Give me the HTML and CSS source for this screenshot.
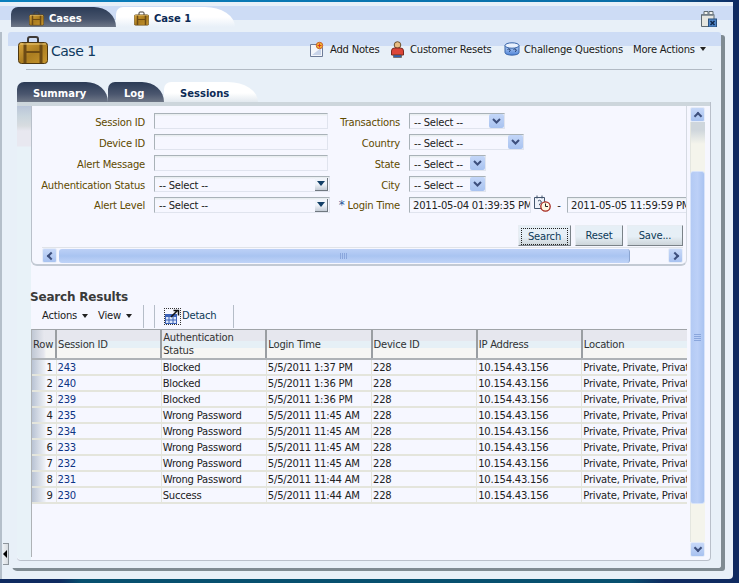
FILE: index.html
```html
<!DOCTYPE html>
<html lang="en">
<head>
<meta charset="utf-8">
<title>Case 1</title>
<link rel="stylesheet" href="styles.css">
</head>
<body>
<svg class="sprite" aria-hidden="true">
  <defs>
    <linearGradient id="gold" x1="0" y1="0" x2="1" y2="1">
      <stop offset="0" stop-color="#d9a63c"/><stop offset=".5" stop-color="#ab7d20"/><stop offset="1" stop-color="#c8962e"/>
    </linearGradient>
    <linearGradient id="drum" x1="0" y1="0" x2="0" y2="1">
      <stop offset="0" stop-color="#bcd3f7"/><stop offset="1" stop-color="#4f84d8"/>
    </linearGradient>
    <symbol id="case" viewBox="0 0 30 28">
      <path d="M10 7V3q0-2 2-2h6q2 0 2 2v4" fill="none" stroke="#3f3a36" stroke-width="2"/>
      <rect x=".5" y="6.5" width="29" height="21" rx="3" fill="url(#gold)" stroke="#4d3710"/>
      <path d="M7 7v20M23 7v20" stroke="#6d4b14" stroke-width="3"/>
      <path d="M8 16h14" stroke="#6d4b14" stroke-width="2"/>
      <path d="M2 8h26" stroke="#eccb78" stroke-width="1"/>
    </symbol>
    <symbol id="note" viewBox="0 0 16 16">
      <path d="M1.5 3.5h9l3 3v9h-12z" fill="#f4f6fa" stroke="#6e7c98"/>
      <path d="M3 14l9-7v7z" fill="#c8d3e8"/>
      <circle cx="10.5" cy="4.500" r="3.200" fill="#f7c531" stroke="#c4552b"/>
      <path d="M10.500 2.500v4M8.500 4.500h4" stroke="#d8382a" stroke-width="1.200"/>
    </symbol>
    <symbol id="person" viewBox="0 0 15 17">
      <circle cx="7.500" cy="4" r="3.300" fill="#e8bd84" stroke="#6b5230"/>
      <path d="M1.500 14V10q0-3 3-3h6q3 0 3 3v4z" fill="#dd4538" stroke="#7a2a20"/>
      <path d="M3.500 14h8v2.500h-8z" fill="#2f5fb0" stroke="#6b5230" stroke-width=".6"/>
    </symbol>
    <symbol id="drumq" viewBox="0 0 16 14">
      <path d="M1 3.500v7c0 3.500 14 3.500 14 0v-7z" fill="url(#drum)" stroke="#3864a8"/>
      <ellipse cx="8" cy="3.500" rx="7" ry="2.700" fill="#e9f1fd" stroke="#3864a8"/>
      <path d="M3.500 7.500q1.500-1.300 2.500 0t-1 2.200M9.500 7.500q1.500-1.300 2.500 0t-1 2.200" fill="none" stroke="#15305e" stroke-width=".9"/>
    </symbol>
    <symbol id="closewin" viewBox="0 0 16 16">
      <path d="M.5 3.500h12.500v12h-12.500z" fill="#e6e6e0" stroke="#5e6a72"/>
      <path d="M3 .5h4v3H3zM8 .5h4v3H8z" fill="#f3f3ee" stroke="#5e6a72"/>
      <path d="M1 3.500h12v1.500H1z" fill="#8b959c"/>
      <rect x="7.500" y="8" width="8" height="8" fill="#4f86c8" stroke="#29507f"/>
      <path d="M9.500 10l4 4M13.500 10l-4 4" stroke="#10284c" stroke-width="1.500"/>
    </symbol>
    <symbol id="detach" viewBox="0 0 15 15">
      <rect x=".5" y="5.500" width="11" height="9" fill="#dce7fb" stroke="#3d63b8"/>
      <path d="M.5 5.500h11v2.500H.5z" fill="#3d63b8"/>
      <path d="M4 8v6M8 8v6M1 11h10" stroke="#3d63b8"/>
      <path d="M6 8l6-6M8.500 1.500h5v5" fill="none" stroke="#111" stroke-width="1.500"/>
    </symbol>
    <symbol id="calclock" viewBox="0 0 17 17">
      <path d="M.5 2.500h10v11H.5z" fill="#eef2fa" stroke="#44566e"/>
      <path d="M3 .5v3M8 .5v3" stroke="#44566e"/>
      <path d="M4 6q1.500-1.500 3 0t-1.500 3v1.200" fill="none" stroke="#44566e"/>
      <circle cx="11.500" cy="11.500" r="4.700" fill="#fff6e0" stroke="#a5281e" stroke-width="1.300"/>
      <path d="M11.500 8.500v3h2.500" fill="none" stroke="#222"/>
    </symbol>
    <symbol id="chev-down" viewBox="0 0 9 6">
      <path d="M1 1l3.500 3.500L8 1" fill="none" stroke="#3d4f7d" stroke-width="2"/>
    </symbol>
  </defs>
</svg>

<div class="window">
  <div class="handle"><span class="handle-arrow"></span></div>

  <div class="top-row">
    <div class="toptab toptab-dark"><svg class="ic-case-sm"><use href="#case"/></svg>Cases</div>
    <div class="toptab toptab-light"><svg class="ic-case-sm"><use href="#case"/></svg>Case 1</div>
    <svg class="ic-close"><use href="#closewin"/></svg>
  </div>

  <div class="card">
    <div class="head">
      <svg class="ic-case-lg"><use href="#case"/></svg>
      <div class="head-title">Case 1</div>
      <div class="head-actions">
        <svg class="ic-note"><use href="#note"/></svg><span class="act act-notes">Add Notes</span>
        <svg class="ic-person"><use href="#person"/></svg><span class="act act-resets">Customer Resets</span>
        <svg class="ic-drum"><use href="#drumq"/></svg><span class="act act-quest">Challenge Questions</span>
        <span class="act act-more">More Actions</span><span class="tri"></span>
      </div>
    </div>
    <div class="rule"></div>

    <div class="subtabs">
      <div class="subtab subtab-dark subtab-summary">Summary</div>
      <div class="subtab subtab-dark subtab-log">Log</div>
      <div class="subtab subtab-light subtab-sessions">Sessions</div>
    </div>

    <div class="panel">
      <div class="panel-bar"></div>
      <div class="panel-body">
        <div class="rail"></div>
        <div class="main">
          <section class="frame">
            <div class="form-grid">
              <label class="lbl">Session ID</label><input class="inp" type="text">
              <label class="lbl lbl2">Transactions</label><div class="sel sel-w96"><span>-- Select --</span><b class="chev"><svg><use href="#chev-down"/></svg></b></div>

              <label class="lbl">Device ID</label><input class="inp" type="text">
              <label class="lbl lbl2">Country</label><div class="sel sel-w115"><span>-- Select --</span><b class="chev"><svg><use href="#chev-down"/></svg></b></div>

              <label class="lbl">Alert Message</label><input class="inp" type="text">
              <label class="lbl lbl2">State</label><div class="sel sel-w77"><span>-- Select --</span><b class="chev"><svg><use href="#chev-down"/></svg></b></div>

              <label class="lbl">Authentication Status</label><div class="sel sel-wide"><span>-- Select --</span><b class="drop"></b></div>
              <label class="lbl lbl2">City</label><div class="sel sel-w77"><span>-- Select --</span><b class="chev"><svg><use href="#chev-down"/></svg></b></div>

              <label class="lbl lbl-last">Alert Level</label><div class="sel sel-wide sel-last"><span>-- Select --</span><b class="drop"></b></div>
              <label class="lbl lbl2 lbl-last"><i class="req">*</i> Login Time</label>
              <div class="dates">
                <input class="inp inp-date" type="text" value="2011-05-04 01:39:35 PM">
                <svg class="ic-cal"><use href="#calclock"/></svg>
                <span class="dash">-</span>
                <input class="inp inp-date inp-date2" type="text" value="2011-05-05 11:59:59 PM">
              </div>
            </div>
            <div class="btns">
              <button class="btn btn-search" type="button"><span>Search</span></button>
              <button class="btn btn-reset" type="button">Reset</button>
              <button class="btn btn-save" type="button">Save...</button>
            </div>
            <div class="hscroll">
              <b class="sbtn"><i class="arr arr-l"></i></b>
              <div class="hthumb"><span class="grip-v"></span></div>
              <b class="sbtn sbtn-end"><i class="arr arr-r"></i></b>
            </div>
          </section>

          <h2 class="res-title">Search Results</h2>
          <div class="toolbar">
            <span class="tb-menu tb-actions">Actions<i class="tri"></i></span>
            <span class="tb-menu tb-view">View<i class="tri"></i></span>
            <span class="tb-sep tb-sep1"></span>
            <span class="tb-sep tb-sep2"></span>
            <svg class="ic-detach"><use href="#detach"/></svg>
            <span class="tb-detach">Detach</span>
            <span class="tb-sep tb-sep3"></span>
          </div>
          <div class="table-wrap">
            <table class="results">
              <colgroup>
                <col class="c-row"><col class="c-col"><col class="c-col"><col class="c-col"><col class="c-col"><col class="c-col"><col class="c-col">
              </colgroup>
              <thead>
                <tr><th>Row</th><th>Session ID</th><th>Authentication<br>Status</th><th>Login Time</th><th>Device ID</th><th>IP Address</th><th>Location</th></tr>
              </thead>
              <tbody>
                <tr><td class="rownum">1</td><td><a href="#">243</a></td><td>Blocked</td><td>5/5/2011 1:37 PM</td><td>228</td><td>10.154.43.156</td><td>Private, Private, Private</td></tr>
                <tr><td class="rownum">2</td><td><a href="#">240</a></td><td>Blocked</td><td>5/5/2011 1:36 PM</td><td>228</td><td>10.154.43.156</td><td>Private, Private, Private</td></tr>
                <tr><td class="rownum">3</td><td><a href="#">239</a></td><td>Blocked</td><td>5/5/2011 1:36 PM</td><td>228</td><td>10.154.43.156</td><td>Private, Private, Private</td></tr>
                <tr><td class="rownum">4</td><td><a href="#">235</a></td><td>Wrong Password</td><td>5/5/2011 11:45 AM</td><td>228</td><td>10.154.43.156</td><td>Private, Private, Private</td></tr>
                <tr><td class="rownum">5</td><td><a href="#">234</a></td><td>Wrong Password</td><td>5/5/2011 11:45 AM</td><td>228</td><td>10.154.43.156</td><td>Private, Private, Private</td></tr>
                <tr><td class="rownum">6</td><td><a href="#">233</a></td><td>Wrong Password</td><td>5/5/2011 11:45 AM</td><td>228</td><td>10.154.43.156</td><td>Private, Private, Private</td></tr>
                <tr><td class="rownum">7</td><td><a href="#">232</a></td><td>Wrong Password</td><td>5/5/2011 11:45 AM</td><td>228</td><td>10.154.43.156</td><td>Private, Private, Private</td></tr>
                <tr><td class="rownum">8</td><td><a href="#">231</a></td><td>Wrong Password</td><td>5/5/2011 11:44 AM</td><td>228</td><td>10.154.43.156</td><td>Private, Private, Private</td></tr>
                <tr><td class="rownum">9</td><td><a href="#">230</a></td><td>Success</td><td>5/5/2011 11:44 AM</td><td>228</td><td>10.154.43.156</td><td>Private, Private, Private</td></tr>
              </tbody>
            </table>
          </div>
        </div>
        <div class="vscroll">
          <b class="sbtn"><i class="arr arr-u"></i></b>
          <div class="vtrack">
            <div class="vthumb"><span class="grip-h"></span></div>
          </div>
          <b class="sbtn"><i class="arr arr-d"></i></b>
        </div>
      </div>
    </div>
  </div>
</div>
</body>
</html>
```
FILE: styles.css
```css
* { box-sizing: border-box; }
html, body { margin: 0; height: 100%; }
body {
  overflow: hidden;
  background:
    linear-gradient(90deg, #0a7fbc 0, #0a6fa8 85%, #0f2a60 100%) top / 100% 10px no-repeat,
    linear-gradient(90deg, #0f2a60 8%, #07506f 11%, #07506f 85%, #0f2a60 90%);
  font: 10px "DejaVu Sans", sans-serif;
  letter-spacing: -.22px;
  color: #222;
}
.sprite { display: block; width: 0; height: 0; }

.window {
  position: relative;
  margin-top: 2px;
  width: 733px;
  height: 577px;
  background: #e8f0f8;
  border-left: 2px solid #b4bfca;
  border-radius: 0 6px 4px 0;
}
.handle {
  position: absolute;
  left: 1px;
  top: 541px;
  width: 6px;
  height: 22px;
  background: linear-gradient(90deg, #eef1f4, #d6dbe0);
  border: 1px solid #8d959c;
  border-left: 0;
  display: flex;
  align-items: center;
}
.handle-arrow {
  width: 0; height: 0;
  border: 4px solid transparent;
  border-left: 0;
  border-right: 4px solid #000;
}

/* top tabs */
.top-row {
  display: flex;
  height: 30px;
  margin-left: -2px;
  padding: 5px 16px 0 11px;
  background: linear-gradient(#e8f0f8 4px, #cddcf5 4px, #cddcf5 18px, #e8f0f8 18px);
}
.toptab {
  height: 20px;
  padding-top: 3px;
  display: flex;
  align-items: center;
  font-weight: bold;
  font-size: 10px;
  letter-spacing: 0;
}
.toptab-dark {
  width: 105px;
  padding-left: 18px;
  color: #fff;
  border-radius: 7px 22px 0 0 / 7px 20px 0 0;
  background: linear-gradient(#2b3b56, #46536b 60%, #6e7787);
}
.toptab-light {
  width: 119px;
  padding-left: 18px;
  color: #0c2a55;
  border-radius: 7px 30px 0 0 / 7px 20px 0 0;
  background: linear-gradient(#fff, #fff 50%, #e8f0f8);
}
.ic-case-sm { width: 15px; height: 15px; margin-right: 5px; }
.ic-close { width: 16px; height: 16px; margin: 4px 0 0 auto; }

/* card */
.card {
  margin-left: 6px;
  width: 713px;
  height: 536px;
  border-radius: 3px 3px 3px 5px;
  background: linear-gradient(#cddcf5 14px, #e8f0f8 14px, #e8f0f8 100%);
  box-shadow: 4px 3px 0 #7f8b92;
}
.head {
  display: flex;
  height: 37px;
  padding: 4px 0 0 10px;
}
.ic-case-lg { width: 30px; height: 28px; }
.head-title {
  margin: 5px 0 0 3px;
  font-size: 14px;
  letter-spacing: -.5px;
  line-height: 20px;
  color: #0f3a5f;
}
.head-actions {
  display: flex;
  align-items: center;
  height: 18px;
  margin: 4px 0 0 auto;
  padding-right: 15px;
  color: #1a1a1a;
  white-space: nowrap;
}
.head-actions svg { flex: none; }
.ic-note { width: 16px; height: 16px; }
.act-notes { margin-left: 5px; width: 56px; }
.ic-person { width: 15px; height: 17px; margin-left: 4px; }
.act-resets { margin-left: 5px; width: 89px; }
.ic-drum { width: 16px; height: 14px; margin-left: 5px; }
.act-quest { margin-left: 4px; width: 101px; }
.act-more { margin-left: 8px; width: 67px; }
.tri {
  display: inline-block;
  width: 0; height: 0;
  border: 3px solid transparent;
  border-top: 4px solid #222;
  border-bottom: 0;
}
.rule {
  height: 1px;
  margin: 0 9px 0 18px;
  background: #b2bac4;
}

/* sub tabs */
.subtabs {
  display: flex;
  margin: 12px 0 0 9px;
  height: 20px;
}
.subtab {
  height: 20px;
  padding-top: 5px;
  line-height: 14px;
  font-weight: bold;
  letter-spacing: 0;
}
.subtab-dark {
  color: #fff;
  border-radius: 7px 22px 0 0 / 7px 20px 0 0;
  background: linear-gradient(#2b3b56, #4a566e 60%, #6e7787);
}
.subtab-light {
  color: #0c2a55;
  border-radius: 7px 30px 0 0 / 7px 20px 0 0;
  background: linear-gradient(#fff, #fff 55%, #e2e9ef);
}
.subtab-summary { width: 91px; padding-left: 16px; }
.subtab-log { width: 56px; padding-left: 16px; }
.subtab-sessions { width: 94px; padding-left: 16px; }

/* panel */
.panel {
  margin-left: 9px;
  width: 694px;
  height: 459px;
  border-right: 1px solid #b9c0ca;
  border-bottom: 1px solid #b9c0ca;
  border-radius: 0 0 4px 4px;
  overflow: hidden;
  background: #f6f7ff;
}
.panel-bar { height: 4px; background: #cdd6dc; }
.panel-body { display: flex; height: 454px; }
.rail {
  width: 14px;
  flex: none;
  background: linear-gradient(#b9c5d9 0, #c9d5dd 10px, #d8dce0 20px, #e8e8f0 25px, #e8e8f0 40px, #e8f2f8 41px);
  border-radius: 0 0 0 5px;
}
.main { width: 659px; flex: none; }

/* form frame */
.frame {
  width: 656px;
  height: 160px;
  padding-top: 7px;
  border-left: 1px solid #b9c0ca;
  border-right: 1px solid #d5dae2;
  border-bottom: 2px solid #c3cad4;
  border-radius: 0 0 6px 6px;
  overflow: hidden;
}
.form-grid {
  display: grid;
  grid-template-columns: 122px 176px 79px 1fr;
  grid-auto-rows: 16px;
  row-gap: 5px;
  align-items: center;
}
.lbl {
  text-align: right;
  padding: 2px 9px 0 0;
  color: #5f4a00;
  white-space: nowrap;
}
.lbl-last { padding-top: 0; }
.req { color: #2a5a9a; font-style: normal; font-size: 12px; }
.inp {
  display: block;
  width: 174px;
  height: 16px;
  margin: 0;
  padding: 0 3px;
  background: linear-gradient(#e9eef0 1px, #f6f7ff 2px);
  border: 1px solid #e0e4ee;
  border-top: 1px solid #a9b2b8;
  border-left: 1px solid #a9b2b8;
  border-radius: 0;
  outline: 0;
  font: 10px "DejaVu Sans", sans-serif;
  letter-spacing: -.22px;
  color: #222;
}
.sel {
  display: flex;
  align-items: center;
  justify-content: space-between;
  height: 16px;
  padding-left: 4px;
  background: linear-gradient(#e9eef0 1px, #f6f7ff 2px);
  border: 1px solid #e0e4ee;
  border-top: 1px solid #a9b2b8;
  border-left: 1px solid #a9b2b8;
}
.sel > span { padding-top: 2px; }
.sel-last > span { padding-top: 0; }
.sel-wide { width: 176px; }
.sel-w96 { width: 96px; }
.sel-w115 { width: 115px; }
.sel-w77 { width: 77px; }
.chev {
  display: flex;
  align-items: center;
  justify-content: center;
  width: 15px;
  height: 14px;
  background: linear-gradient(#c3d6f8, #a9c3f0);
  border-radius: 2px;
}
.chev svg { width: 9px; height: 6px; }
.drop {
  display: flex;
  align-items: center;
  justify-content: center;
  width: 13px;
  height: 13px;
  margin-right: 1px;
  background: linear-gradient(#f0f4fa 50%, #c4ccd6);
  border-right: 1px solid #707880;
  border-bottom: 1px solid #707880;
}
.drop::after {
  content: "";
  border: 4px solid transparent;
  border-top: 5px solid #123e66;
  border-bottom: 0;
}
.dates { display: flex; align-items: center; width: 279px; }
.inp-date { flex: none; width: 122px; padding-right: 0; white-space: nowrap; }
.inp-date2 { width: 125px; margin-right: -6px; }
.ic-cal { flex: none; width: 17px; height: 17px; margin: -3px 0 0 3px; }
.dash { flex: none; width: 16px; text-align: center; }

.btns {
  display: flex;
  gap: 4px;
  justify-content: flex-end;
  margin-top: 12px;
  padding-right: 3px;
}
.btn {
  height: 21px;
  padding: 0;
  font: 10px "DejaVu Sans", sans-serif;
  letter-spacing: -.22px;
  color: #0c3a58;
  background: linear-gradient(#e6eff6, #e6eff6 55%, #cdd5da);
  border: 1px solid #e8edf3;
  border-right: 1px solid #7a8288;
  border-bottom: 1px solid #7a8288;
}
.btn-search { width: 53px; }
.btn-search span { display: block; margin: 2px; padding: 1px 0; border: 1px dotted #222; line-height: 13px; }
.btn-reset { width: 48px; }
.btn-save { width: 56px; }

.hscroll {
  display: flex;
  align-items: center;
  height: 16px;
  margin: 1px 3px 0 10px;
  background: #f6f7ff;
  border-top: 1px solid #e0e3e8;
}
.sbtn {
  display: flex;
  flex: none;
  align-items: center;
  justify-content: center;
  width: 15px;
  height: 15px;
  background: linear-gradient(#c7d8f8, #a8c2f0);
  border: 1px solid #e5ecf8;
  border-radius: 2px;
}
.sbtn-end { margin-left: auto; }
.arr {
  width: 6px; height: 6px;
  border-left: 2px solid #3d4f7d;
  border-top: 2px solid #3d4f7d;
}
.arr-l { transform: rotate(-45deg); margin-left: 2px; }
.arr-r { transform: rotate(135deg); margin-right: 2px; }
.arr-u { transform: rotate(45deg); margin-top: 3px; }
.arr-d { transform: rotate(225deg); margin-top: -3px; }
.hthumb {
  display: flex;
  align-items: center;
  justify-content: center;
  width: 571px;
  height: 14px;
  margin-left: 2px;
  background: linear-gradient(#bcd0f6, #a9c4f1 50%, #c0d4f8);
  border-radius: 3px;
  border-right: 1px solid #8aa4d0;
}
.grip-v {
  width: 8px; height: 6px;
  background: repeating-linear-gradient(90deg, #8aa6dc 0 1px, transparent 1px 2px);
}

/* results */
.res-title {
  margin: 24px 0 0 -1px;
  font-size: 12px;
  letter-spacing: -.2px;
  line-height: 14px;
  font-weight: bold;
  color: #3a3a3a;
}
.toolbar {
  display: flex;
  align-items: center;
  height: 23px;
  margin-top: 1px;
  color: #1a1a1a;
}
.tb-menu { display: flex; align-items: center; margin-bottom: 2px; }
.tb-menu .tri { margin: 1px 0 0 5px; }
.tb-actions { margin-left: 11px; width: 56px; }
.tb-view { width: 45px; }
.tb-sep { flex: none; width: 1px; height: 23px; background: #b5bdc8; }
.tb-sep2 { margin-left: 10px; }
.ic-detach { flex: none; width: 15px; height: 15px; margin-left: 10px; outline: 1px dotted #333; }
.tb-detach { flex: none; width: 51px; margin: 0 0 2px 2px; color: #0c3a58; }

.table-wrap {
  width: 656px;
  height: 228px;
  margin-top: 1px;
  overflow: hidden;
  border-top: 1px solid #a0a4a8;
  border-left: 1px solid #aeb2b6;
}
.results {
  width: 655px;
  table-layout: fixed;
  border-collapse: collapse;
  font-size: 10px;
}
.c-row { width: 24px; }
.c-col { width: 105px; }
.results th {
  height: 29px;
  padding: 0 0 0 1px;
  text-align: left;
  font-weight: normal;
  line-height: 13px;
  color: #333;
  white-space: nowrap;
  overflow: hidden;
  vertical-align: middle;
  background: linear-gradient(#e6e7ee 11px, #e6f0f6 11px, #e6f0f6 18px, #f6f6f4 18px);
  border-right: 2px solid #9a9ea2;
  border-bottom: 2px solid #aeb2b6;
}
.results th:first-child { padding-left: 1px; background: linear-gradient(90deg, #c0c8d4, #e6e7ee 12px, transparent 14px), linear-gradient(#e6e7ee 11px, #e6f0f6 11px, #e6f0f6 18px, #f6f6f4 18px); }
.results th:last-child { border-right: 0; }
.results td {
  height: 16px;
  padding: 2px 0 0 1px;
  line-height: 12px;
  white-space: nowrap;
  overflow: hidden;
  border-right: 1px solid #e4e5dc;
  border-bottom: 2px solid #e4e5dc;
}
.results td:last-child { border-right: 0; }
.results a { color: #0c3384; text-decoration: none; }
.rownum {
  text-align: right;
  padding-right: 3px !important;
  background: linear-gradient(90deg, #b9c3d4, #eef1f6 13px, transparent 14px);
}

/* vertical scroller */
.vscroll {
  display: flex;
  flex-direction: column;
  width: 15px;
  height: 450px;
  margin-top: 1px;
  flex: none;
}
.vtrack {
  flex: 1;
  padding-top: 49px;
  background: linear-gradient(#cfd6dc 8px, #f4f4ec 22px);
  border-left: 1px solid #e4e6e0;
}
.vthumb {
  display: flex;
  align-items: center;
  justify-content: center;
  height: 333px;
  margin-left: -1px;
  background: linear-gradient(90deg, #b3caf4, #bcd0f7 50%, #a9c3f1);
  border: 1px solid #d7e3fa;
  border-radius: 3px;
}
.grip-h {
  width: 7px; height: 8px;
  background: repeating-linear-gradient(#8aa6dc 0 1px, transparent 1px 2px);
}
```
